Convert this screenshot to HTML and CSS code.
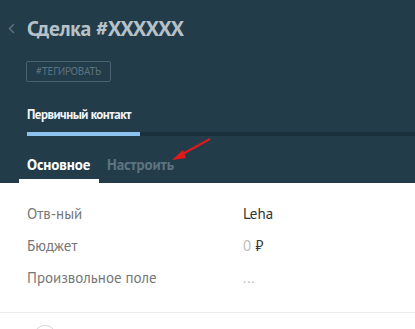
FILE: index.html
```html
<!DOCTYPE html>
<html lang="ru">
<head>
<meta charset="utf-8">
<link rel="stylesheet" href="styles.css">
</head>
<body>
<div class="page">
  <header class="head">
    <div class="title-row">
      <svg class="back" width="7" height="11" viewBox="0 0 7 11"><path d="M6 1 L1.5 5.5 L6 10" fill="none" stroke="#5b6f7a" stroke-width="1.6"/></svg>
      <h1 class="title">Сделка #XXXXXX</h1>
    </div>
    <div class="tag-row"><span class="tag">#ТЕГИРОВАТЬ</span></div>
    <div class="stage">
      <div class="stage-name">Первичный контакт</div>
      <div class="progress"><div class="progress-fill" style="width:113px"></div></div>
    </div>
    <nav class="tabs">
      <span class="tab active">Основное</span>
      <span class="tab">Настроить</span>
    </nav>
    <svg class="arrow" width="50" height="30" viewBox="0 0 50 30"><path d="M43 3 L12 20" stroke="#e2191c" stroke-width="2" fill="none"/><path d="M5 24 L16 14 L19 22 Z" fill="#e2191c"/></svg>
  </header>
  <section class="fields">
    <div class="field"><span class="label">Отв-ный</span><span class="value">Leha</span></div>
    <div class="field"><span class="label">Бюджет</span><span class="value"><span class="muted">0</span> ₽</span></div>
    <div class="field"><span class="label">Произвольное поле</span><span class="value muted">...</span></div>
  </section>
  <div class="bottom">
    <span class="circle"></span>
  </div>
</div>
</body>
</html>
```
FILE: styles.css
```css
html, body {
  margin: 0;
  padding: 0;
  background: #fff;
}
body {
  font-family: "PT Sans", "Noto Sans", "Open Sans", sans-serif;
  width: 415px;
  height: 329px;
  overflow: hidden;
}
.page {
  width: 415px;
  height: 329px;
  overflow: hidden;
}
.head {
  position: relative;
  background: #223c4a;
  height: 183px;
  box-sizing: border-box;
  padding-top: 15px;
}
.title-row {
  display: flex;
  align-items: center;
  padding-left: 8px;
  height: 26px;
}
.back {
  margin-right: 12px;
}
.title {
  margin: 0;
  font-size: 21.5px;
  line-height: 26px;
  font-weight: 700;
  color: #b7c2c8;
  letter-spacing: -0.3px;
}
.tag-row {
  padding-left: 26px;
  margin-top: 20px;
  display: flex;
}
.tag {
  display: inline-block;
  box-sizing: border-box;
  height: 21px;
  width: 85px;
  border: 1px solid #4a6270;
  border-radius: 2px;
  font-size: 11px;
  line-height: 19px;
  color: #5c7380;
  text-align: center;
  letter-spacing: -0.3px;
}
.stage {
  margin-top: 24px;
  padding-left: 27px;
}
.stage-name {
  font-size: 13px;
  font-weight: 700;
  color: #f2f5f7;
  line-height: 18px;
  letter-spacing: -0.5px;
}
.progress {
  margin-top: 8px;
  height: 4px;
  background: #1a303c;
}
.progress-fill {
  height: 4px;
  background: #8fc3ef;
}
.tabs {
  display: flex;
  padding-left: 19px;
  margin-top: 20px;
}
.tab {
  font-size: 15px;
  font-weight: 700;
  line-height: 18px;
  color: #5d7480;
  letter-spacing: -0.1px;
  padding: 0 8px;
  height: 27px;
  box-sizing: border-box;
}
.tab.active {
  color: #fff;
  width: 80px;
  padding-right: 0;
  margin-right: 0;
  border-bottom: 4px solid #fff;
}
.arrow {
  position: absolute;
  left: 167px;
  top: 136px;
}
.fields {
  padding: 15px 0 18px 27px;
  border-bottom: 1px solid #ececec;
}
.field {
  display: grid;
  grid-template-columns: 216px 1fr;
  height: 32px;
  font-size: 15px;
  line-height: 32px;
}
.label {
  color: #777;
}
.value {
  color: #333;
}
.muted {
  color: #bdbdbd;
}
.bottom {
  padding: 12px 0 0 33px;
}
.circle {
  display: block;
  width: 22px;
  height: 22px;
  border: 1px solid #d6d6d6;
  border-radius: 50%;
}
```
